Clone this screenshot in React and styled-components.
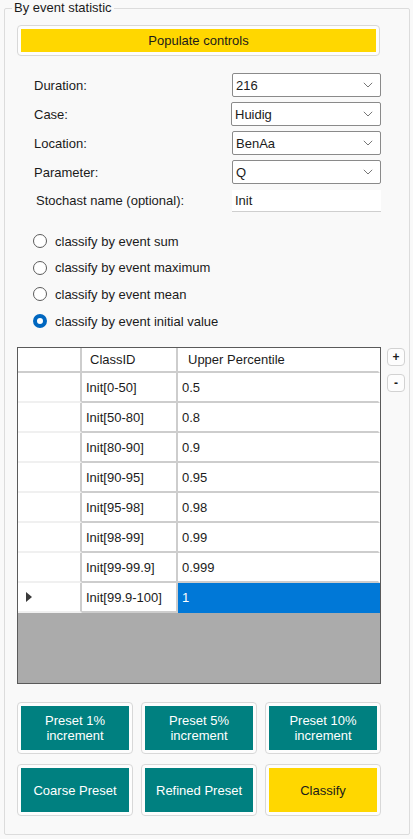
import React from "react";
import styled, { createGlobalStyle, css } from "styled-components";

const GlobalStyle = createGlobalStyle`
  html, body {
    margin: 0;
    padding: 0;
    background: #f9f9f9;
  }
  body {
    font-family: "Liberation Sans", Arial, sans-serif;
    font-size: 13px;
    color: #1b1b1b;
  }
`;

const Group = styled.fieldset`
  margin: 0 2px 0 4px;
  padding: 0 0 18px 12px;
  border: 1px solid #dcdcdc;
  border-radius: 2px;
  width: 406px;
  box-sizing: border-box;
`;

const Legend = styled.legend`
  margin-left: -5px;
  padding: 0 2px;
  line-height: 16px;
  font-size: 13px;
  color: #1b1b1b;
`;

const FrameButton = styled.button`
  display: block;
  box-sizing: border-box;
  padding: 3px;
  border: 1px solid #d8d8d8;
  border-radius: 4px;
  background: #fdfdfd;
  font: inherit;
  cursor: pointer;
  width: ${(p) => p.$width || "100%"};
  height: ${(p) => p.$height || "31px"};
`;

const ButtonFace = styled.span`
  display: flex;
  align-items: center;
  justify-content: center;
  height: 100%;
  line-height: 15px;
  font-size: 13px;
  text-align: center;
  ${(p) =>
    p.$tone === "teal"
      ? css`
          background: #008080;
          color: #ffffff;
        `
      : css`
          background: #ffd700;
          color: #1b1b1b;
        `}
`;

const Populate = styled(FrameButton)`
  margin-top: 9px;
  width: 363px;
`;

const Form = styled.div`
  margin-top: 17px;
  display: grid;
  grid-template-columns: 198px 149px;
  row-gap: 5px;
  padding-left: 17px;
  align-items: center;
`;

const Label = styled.label`
  font-size: 13px;
  padding-left: ${(p) => p.$indent || 0}px;
`;

const Combo = styled.div`
  box-sizing: border-box;
  height: 24px;
  border: 1px solid #8a8a8a;
  border-radius: 2px;
  background: #ffffff;
  display: flex;
  align-items: center;
  justify-content: space-between;
  padding: 0 7px 0 3px;
  font-size: 13px;
  margin-left: ${(p) => p.$shift || 0}px;
`;

const TextBox = styled.div`
  box-sizing: border-box;
  height: 22px;
  margin-top: 1px;
  border-bottom: 1px solid #cfcfcf;
  background: #ffffff;
  display: flex;
  align-items: center;
  padding: 0 3px;
  font-size: 13px;
`;

const Radios = styled.div`
  margin-top: 16px;
  padding-left: 16px;
  display: flex;
  flex-direction: column;
`;

const RadioRow = styled.div`
  height: 26.6px;
  display: flex;
  align-items: center;
  gap: 8px;
`;

const RadioDot = styled.span`
  box-sizing: border-box;
  width: 14px;
  height: 14px;
  border-radius: 50%;
  flex: none;
  background: #ffffff;
  ${(p) =>
    p.$checked
      ? css`
          border: 4px solid #0067c0;
        `
      : css`
          border: 1px solid #5c5c5c;
        `}
`;

const GridArea = styled.div`
  margin-top: 13px;
  display: flex;
  gap: 6px;
  align-items: flex-start;
`;

const Table = styled.div`
  box-sizing: border-box;
  width: 364px;
  height: 337px;
  border: 1px solid #5a5a5a;
  background: #ababab;
  display: grid;
  grid-template-columns: 64px 96px 1fr;
  grid-template-rows: 25px repeat(8, 30px);
  align-content: start;
`;

const Cell = styled.div`
  box-sizing: border-box;
  display: flex;
  align-items: center;
  padding-left: ${(p) => (p.$rowHead ? 0 : 4)}px;
  background: #ffffff;
  font-size: 13px;
  border-right: 2px solid ${(p) => (p.$last ? "transparent" : "#cdcdcd")};
  border-bottom: 2px solid ${(p) => (p.$rowHead ? "#f0f0f0" : "#cdcdcd")};
  ${(p) =>
    p.$header &&
    css`
      padding-left: ${p.$last ? 10 : 8}px;
      border-bottom-color: #cdcdcd;
    `}
  ${(p) =>
    p.$selected &&
    css`
      background: #0078d7;
      color: #ffffff;
      border-color: #0078d7;
    `}
`;

const RowMark = styled.span`
  margin-left: 8px;
  width: 0;
  height: 0;
  border-top: 5px solid transparent;
  border-bottom: 5px solid transparent;
  border-left: 6px solid #3a3a3a;
`;

const SideButtons = styled.div`
  display: flex;
  flex-direction: column;
  gap: 8px;
  padding-top: 1px;
`;

const SmallButton = styled.button`
  box-sizing: border-box;
  width: 18px;
  height: 18px;
  padding: 0;
  border: 1px solid #d2d2d2;
  border-radius: 4px;
  background: #fdfdfd;
  font: inherit;
  font-size: 12px;
  font-weight: bold;
  line-height: 14px;
  color: #1b1b1b;
`;

const ButtonGrid = styled.div`
  margin-top: 18px;
  display: grid;
  grid-template-columns: repeat(3, 116px);
  column-gap: 8px;
  row-gap: 10px;
`;

const Chevron = () => (
  <svg width="10" height="6" viewBox="0 0 10 6">
    <path d="M0.8 0.8 L5 5 L9.2 0.8" fill="none" stroke="#777" strokeWidth="1" />
  </svg>
);

const fields = [
  { label: "Duration:", value: "216" },
  { label: "Case:", value: "Huidig", shift: -1 },
  { label: "Location:", value: "BenAa" },
  { label: "Parameter:", value: "Q" },
];

const radios = [
  "classify by event sum",
  "classify by event maximum",
  "classify by event mean",
  "classify by event initial value",
];

const rows = [
  ["Init[0-50]", "0.5"],
  ["Init[50-80]", "0.8"],
  ["Init[80-90]", "0.9"],
  ["Init[90-95]", "0.95"],
  ["Init[95-98]", "0.98"],
  ["Init[98-99]", "0.99"],
  ["Init[99-99.9]", "0.999"],
  ["Init[99.9-100]", "1"],
];

const actions = [
  { text: ["Preset 1%", "increment"], tone: "teal" },
  { text: ["Preset 5%", "increment"], tone: "teal" },
  { text: ["Preset 10%", "increment"], tone: "teal" },
  { text: ["Coarse Preset"], tone: "teal" },
  { text: ["Refined Preset"], tone: "teal" },
  { text: ["Classify"], tone: "yellow" },
];

export default function App() {
  return (
    <>
      <GlobalStyle />
      <Group>
        <Legend>By event statistic</Legend>
        <Populate>
          <ButtonFace>Populate controls</ButtonFace>
        </Populate>

        <Form>
          {fields.map((f) => (
            <React.Fragment key={f.label}>
              <Label>{f.label}</Label>
              <Combo $shift={f.shift}>
                <span>{f.value}</span>
                <Chevron />
              </Combo>
            </React.Fragment>
          ))}
          <Label $indent={2}>Stochast name (optional):</Label>
          <TextBox>Init</TextBox>
        </Form>

        <Radios>
          {radios.map((r, i) => (
            <RadioRow key={r}>
              <RadioDot $checked={i === 3} />
              <span>{r}</span>
            </RadioRow>
          ))}
        </Radios>

        <GridArea>
          <Table>
            <Cell $rowHead $header />
            <Cell $header>ClassID</Cell>
            <Cell $header $last>Upper Percentile</Cell>
            {rows.map(([id, pct], i) => {
              const current = i === rows.length - 1;
              return (
                <React.Fragment key={id}>
                  <Cell $rowHead>{current && <RowMark />}</Cell>
                  <Cell>{id}</Cell>
                  <Cell $last $selected={current}>{pct}</Cell>
                </React.Fragment>
              );
            })}
          </Table>
          <SideButtons>
            <SmallButton>+</SmallButton>
            <SmallButton>-</SmallButton>
          </SideButtons>
        </GridArea>

        <ButtonGrid>
          {actions.map((a) => (
            <FrameButton key={a.text.join(" ")} $height="52px">
              <ButtonFace $tone={a.tone}>
                {a.text.map((line, i) => (
                  <React.Fragment key={line}>
                    {i > 0 && <br />}
                    {line}
                  </React.Fragment>
                ))}
              </ButtonFace>
            </FrameButton>
          ))}
        </ButtonGrid>
      </Group>
    </>
  );
}
